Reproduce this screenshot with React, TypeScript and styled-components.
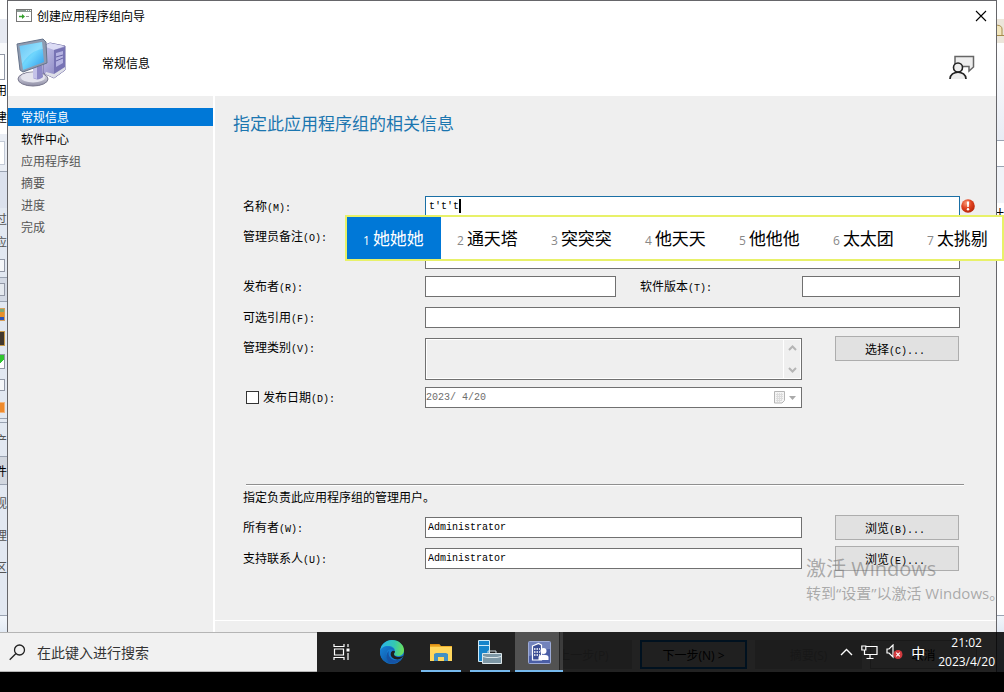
import React from "react";
import styled, { createGlobalStyle, css } from "styled-components";

const GlobalStyle = createGlobalStyle`
  *, *::before, *::after { box-sizing: border-box; }
  html, body { margin: 0; background: #000; }
  body { font: 12px/18px "Noto Sans CJK SC", sans-serif; color: #000; }
  button, input, textarea { font: inherit; color: inherit; margin: 0; border-radius: 0; }
`;

/* ---------- desktop ---------- */

const Screen = styled.div`
  padding-bottom: 20px;
  background: #000;
`;

const Desktop = styled.div`
  position: relative;
  display: grid;
  grid-template-columns: 7px minmax(0, 1fr) 7px;
  min-height: calc(100vh - 20px);
`;

const Strip = styled.div`
  display: flex;
  flex-direction: column;
  width: 7px;
  overflow: hidden;
  background: #e2e8f1;
`;

const Segment = styled.div<{ $h?: number; $bg?: string; $line?: boolean; $dim?: boolean }>`
  display: flex;
  align-items: center;
  justify-content: flex-end;
  flex: ${(p) => (p.$h ? `0 0 ${p.$h}px` : "1 0 0")};
  background: ${(p) => p.$bg ?? "transparent"};
  border-bottom: ${(p) => (p.$line ? "1px solid #9aa3b2" : "0")};
  color: ${(p) => (p.$dim ? "#555" : "#000")};
  white-space: nowrap;
  overflow: hidden;
`;

const MiniBox = styled.span<{ $h: number; $bg: string; $edge?: string }>`
  flex: none;
  width: 10px;
  height: ${(p) => p.$h}px;
  margin-right: 2px;
  background: ${(p) => p.$bg};
  border: 1px solid ${(p) => p.$edge ?? "#9298a6"};
`;

/* ---------- dialog ---------- */

const Dialog = styled.section`
  display: flex;
  flex-direction: column;
  min-width: 0;
  border: 1px solid #66666a;
  border-bottom: 0;
  background: #efefef;
`;

const TitleBar = styled.header`
  display: flex;
  align-items: center;
  gap: 5px;
  height: 29px;
  padding: 0 9px 0 8px;
  background: #fff;
`;

const Title = styled.h1`
  flex: 1;
  margin: 0;
  font-size: 12px;
  font-weight: 400;
`;

const IconButton = styled.button`
  display: grid;
  place-items: center;
  padding: 0;
  border: 0;
  background: transparent;
`;

const Banner = styled.div`
  display: flex;
  align-items: center;
  height: 66px;
  padding: 0 21px 0 8px;
  background: #fff;
`;

const BannerText = styled.h2`
  flex: 1;
  margin: 0 0 0 34px;
  font-size: 12px;
  font-weight: 400;
`;

const FeedbackButton = styled(IconButton)`
  align-self: flex-end;
  margin-bottom: 16px;
`;

const Columns = styled.div`
  flex: 1;
  display: grid;
  grid-template-columns: 205px minmax(0, 1fr);
`;

const Steps = styled.nav`
  display: flex;
  flex-direction: column;
  gap: 4px;
  padding-top: 12px;
`;

const Step = styled.a<{ $state?: "current" | "ready" }>`
  height: 18px;
  padding-left: 13px;
  line-height: 18px;
  text-decoration: none;
  color: #555;
  ${(p) => p.$state === "ready" && css`color: #000;`}
  ${(p) => p.$state === "current" && css`color: #fff; background: #0078d7;`}
`;

const Main = styled.main`
  display: flex;
  flex-direction: column;
  min-width: 0;
  border-left: 2px solid #fff;
`;

const Heading = styled.h3`
  margin: 14px 0 0 18px;
  font-size: 17px;
  line-height: 26px;
  font-weight: 400;
  color: #1b76b0;
`;

const Form = styled.form`
  display: flex;
  flex-direction: column;
  flex: 1;
  gap: 10px;
  padding: 60px 36px 0 28px;
`;

const LabelText = styled.label`
  line-height: 20px;
  white-space: nowrap;
`;

const Row = styled.div<{ $tall?: boolean }>`
  display: grid;
  grid-template-columns: 182px minmax(0, 1fr);
  min-height: 21px;
  margin-bottom: ${(p) => (p.$tall ? "-3px" : "0")};
  ${(p) => p.$tall && css`
    > ${LabelText} { line-height: 18px; }
  `}
`;

const Key = styled.span`
  font: 10px "Liberation Mono", monospace;
`;

const Field = styled.div`
  position: relative;
  display: grid;
  min-width: 0;
`;

const WithButton = styled.div`
  display: grid;
  grid-template-columns: minmax(0, 1fr) 124px;
  column-gap: 33px;
  align-items: start;
  padding-right: 1px;
`;

const Split = styled.div`
  display: grid;
  grid-template-columns: minmax(0, 191fr) 186px minmax(0, 158fr);
`;

const SplitLabel = styled.div`
  padding-left: 24px;
`;

const boxed = css`
  width: 100%;
  border: 1px solid #707070;
  background: #fff;
  padding: 0 2px;
  outline: 0;
  font: 10px/18px "Liberation Mono", monospace;
`;

const TextInput = styled.input<{ $active?: boolean }>`
  ${boxed}
  height: 21px;
  ${(p) => p.$active && css`border-color: #1a6fa5; padding-left: 3px;`}
`;

const DateInput = styled(TextInput)`
  padding-left: 0;
  color: #6d6d6d;
`;

const TextArea = styled.textarea<{ $off?: boolean }>`
  ${boxed}
  display: block;
  height: 42px;
  resize: none;
  overflow: hidden;
  ${(p) => p.$off && css`background: #efefef; box-shadow: inset 0 0 0 1px #fff;`}
`;

const Caret = styled.span`
  position: absolute;
  left: 34px;
  top: 3px;
  width: 2px;
  height: 14px;
  background: #000;
`;

const ErrorBadge = styled.span`
  position: absolute;
  left: 100%;
  top: 3px;
  width: 16px;
  height: 14px;
  display: grid;
  place-items: center;
`;

const Scroller = styled.span`
  position: absolute;
  top: 2px;
  right: 2px;
  bottom: 2px;
  width: 17px;
  display: flex;
  flex-direction: column;
  align-items: center;
  justify-content: space-between;
  padding: 5px 0;
  border-left: 1px solid #fff;
`;

const DateTools = styled.span`
  position: absolute;
  right: 6px;
  top: 4px;
  display: flex;
  align-items: center;
  gap: 3px;
`;

const PushButton = styled.button`
  width: 100%;
  height: 25px;
  margin: -2px 0 -3px;
  padding: 0 4px 0 0;
  line-height: 21px;
  border: 1px solid #adadad;
  background: #e1e1e1;
  text-align: center;
`;

const CheckLabel = styled.label`
  display: flex;
  align-items: center;
  gap: 4px;
  height: 20px;
  padding-left: 3px;
  white-space: nowrap;
`;

const CheckBox = styled.input`
  appearance: none;
  width: 13px;
  height: 13px;
  border: 1px solid #333;
  background: #fff;
`;

const Owners = styled.fieldset`
  display: flex;
  flex-direction: column;
  gap: 10px;
  min-width: 0;
  margin: 66px 0 0;
  padding: 0;
  border: 0;
`;

const Rule = styled.hr`
  width: auto;
  height: 2px;
  margin: 0 -4px -9px 3px;
  border: 0;
  border-top: 1px solid #8f8f8f;
  background: #fff;
`;

const Note = styled.p`
  margin: 0;
  line-height: 20px;
`;

const Footer = styled.footer`
  display: flex;
  justify-content: flex-end;
  gap: 8px;
  height: 52px;
  padding: 19px 19px 0 0;
  border-top: 1px solid #fff;
`;

const FooterButton = styled.button<{ $kind?: "default" | "off" }>`
  width: 107px;
  height: 29px;
  padding: 0;
  border: 1px solid #adadad;
  background: #e1e1e1;
  font: 12px "Open Sans", "Noto Sans CJK SC", sans-serif;
  ${(p) => p.$kind === "default" && css`border: 2px solid #0078d7;`}
  ${(p) => p.$kind === "off" && css`color: #a5a5a5; border-color: #ccc; background: #ccc;`}
`;

/* ---------- input candidates ---------- */

const Candidates = styled.ol`
  position: absolute;
  z-index: 3;
  left: -80px;
  top: 19px;
  display: flex;
  width: 659px;
  height: 46px;
  margin: 0;
  padding: 0;
  list-style: none;
  overflow: hidden;
  border: 2px solid #e8f169;
  background: #fff;
`;

const Candidate = styled.li<{ $on?: boolean }>`
  flex: 0 0 94px;
  display: flex;
  align-items: baseline;
  gap: 3px;
  padding-left: 16px;
  font-size: 17px;
  line-height: 42px;
  white-space: nowrap;
  color: ${(p) => (p.$on ? "#fff" : "#000")};
  background: ${(p) => (p.$on ? "#0078d7" : "transparent")};
`;

const Digit = styled.span<{ $on?: boolean }>`
  font: 12px "Open Sans", sans-serif;
  color: ${(p) => (p.$on ? "#fff" : "#888")};
`;

/* ---------- overlays ---------- */

const Watermark = styled.div`
  position: absolute;
  z-index: 2;
  left: calc(100% - 198px);
  bottom: 68px;
  width: 193px;
  overflow: hidden;
  font-family: "Open Sans", "Noto Sans CJK SC", sans-serif;
  color: rgba(110, 110, 110, 0.55);
  white-space: nowrap;
  pointer-events: none;
`;

const WatermarkTitle = styled.div`
  font-size: 20px;
  line-height: 26px;
`;

const WatermarkText = styled.div`
  font-size: 15px;
  line-height: 22px;
`;

const Taskbar = styled.div`
  position: absolute;
  z-index: 2;
  left: 0;
  right: 0;
  bottom: 0;
  display: flex;
  height: 40px;
  background: rgba(0, 0, 0, 0.86);
`;

const Search = styled.label`
  display: flex;
  align-items: center;
  gap: 11px;
  width: 317px;
  padding-left: 9px;
  border-top: 1px solid #b5b5b5;
  border-bottom: 1px solid #b5b5b5;
  background: #f1f1f1;
`;

const SearchInput = styled.input`
  flex: 1;
  min-width: 0;
  border: 0;
  padding: 0;
  outline: 0;
  background: transparent;
  font-size: 14px;
  &::placeholder { color: #333; opacity: 1; }
`;

const Apps = styled.div`
  display: flex;
  gap: 1px;
  flex: 1;
`;

const AppButton = styled.button<{ $open?: boolean; $active?: boolean; $wide?: boolean }>`
  position: relative;
  display: grid;
  place-items: center;
  width: ${(p) => (p.$wide ? 50 : 48)}px;
  padding: ${(p) => (p.$wide ? "0 2px 0 0" : "0")};
  border: 0;
  background: ${(p) => (p.$active ? "#525252" : "transparent")};
  &::after {
    content: "";
    position: absolute;
    bottom: 0;
    left: ${(p) => (p.$active ? 0 : 4)}px;
    right: ${(p) => (p.$active ? 0 : 4)}px;
    height: 2px;
    background: ${(p) => (p.$open ? "#76b9ed" : "transparent")};
  }
`;

const StackEdge = styled.span`
  position: absolute;
  right: 0;
  top: 0;
  bottom: 0;
  width: 4px;
  background: #3c3c3c;
  border-left: 1px solid #262626;
`;

const Tray = styled.div`
  display: flex;
  align-items: center;
  padding-right: 9px;
  color: #fff;
`;

const TrayIcons = styled.div`
  display: flex;
  align-items: center;
  gap: 8px;
  margin-right: 13px;
  font-size: 14px;
`;

const Clock = styled.time`
  font: 12px/19px "Open Sans", sans-serif;
  text-align: center;
`;

/* ---------- drawings ---------- */

const WizardIcon = () => (
  <svg width="16" height="13" viewBox="0 0 16 13">
    <rect x=".5" y=".5" width="15" height="12" fill="#fff" stroke="#777" />
    <path d="M1 2h14" stroke="#8b9a93" strokeWidth="2" />
    <path d="M10 1.500h1M12 1.500h1M14 1.500h1" stroke="#fff" />
    <path d="M3 7.500h4" stroke="#35a02c" strokeWidth="1.500" />
    <path d="M6 5l3 2.500L6 10z" fill="#35a02c" />
    <path d="M10 7.500h3" stroke="#999" />
  </svg>
);

const CloseIcon = () => (
  <svg width="12" height="12" viewBox="0 0 12 12">
    <path d="M1 1l10 10M11 1L1 11" stroke="#000" strokeWidth="1.100" />
  </svg>
);

const ComputerIcon = () => (
  <svg width="52" height="52" viewBox="0 -2 52 52">
    <defs>
      <linearGradient id="glass" x1="0" y1="0" x2="1" y2="1">
        <stop offset="0" stopColor="#3fb4f2" />
        <stop offset=".5" stopColor="#6fd6fd" />
        <stop offset="1" stopColor="#2c97ea" />
      </linearGradient>
      <linearGradient id="tower" x1="0" y1="0" x2="1" y2="1">
        <stop offset="0" stopColor="#c7c6ec" />
        <stop offset="1" stopColor="#7d78b8" />
      </linearGradient>
      <linearGradient id="stand" x1="0" y1="0" x2="0" y2="1">
        <stop offset="0" stopColor="#eeeef5" />
        <stop offset="1" stopColor="#8e8da5" />
      </linearGradient>
    </defs>
    <path d="M27 7l7-3 15 3v24l-11 8-11-5z" fill="url(#tower)" stroke="#6b679f" />
    <path d="M27 7l7-3 15 3-11 4z" fill="#dcdcf5" />
    <path d="M38 11l11-3v23l-11 8z" fill="#7773b4" />
    <path d="M40 14l7-2v12l-7 4z" fill="#b5b3e2" />
    <path d="M40 18l7-2M40 22l7-3" stroke="#6762a5" />
    <path d="M30 33l8 2 11-7v3l-11 8-9-4z" fill="#dedfe8" />
    <ellipse cx="17" cy="40" rx="15" ry="7" fill="url(#stand)" stroke="#77768c" />
    <ellipse cx="17" cy="38.500" rx="12" ry="5" fill="#e4e4ee" />
    <path d="M17 29l9-3 1 12c-3 3-7 3-10 1z" fill="#8d89c6" />
    <path d="M17 29l4-1v12l-4-1z" fill="#c4c2e8" />
    <path d="M1 5l26-5 3 3 1 21-24 9-3-2z" fill="#8f9bb0" stroke="#65738b" />
    <path d="M3.500 7L26 3l2 20L7 31z" fill="url(#glass)" />
    <path d="M3.500 7L26 3l1 7C18 11 12 16 6 25z" fill="#fff" opacity=".22" />
  </svg>
);

const FeedbackIcon = () => (
  <svg width="27" height="25" viewBox="0 0 27 25" fill="#eee">
    <path d="M7 9V1.500h18.500V12l-4.500 4v-4.500h-7" stroke="#666" strokeWidth="1.500" />
    <circle cx="10" cy="12.500" r="4.500" stroke="#222" strokeWidth="1.600" />
    <path d="M2 24c0-9 16-9 16 0" stroke="#222" strokeWidth="1.700" />
  </svg>
);

const ErrorIcon = () => (
  <svg width="14" height="14" viewBox="0 0 14 14">
    <defs>
      <radialGradient id="alert" cx=".38" cy=".3" r=".75">
        <stop offset="0" stopColor="#f79a76" />
        <stop offset=".5" stopColor="#df4220" />
        <stop offset="1" stopColor="#b52408" />
      </radialGradient>
    </defs>
    <circle cx="7" cy="7" r="6.800" fill="url(#alert)" />
    <path d="M5.800 2.500h2.400L7.700 8H6.300z" fill="#fff" />
    <circle cx="7" cy="10.300" r="1.200" fill="#fff" />
  </svg>
);

const Arrow = ({ up }: { up?: boolean }) => (
  <svg width="9" height="6" viewBox="0 0 9 6" fill="none">
    <path d={up ? "M1 5l3.500-3.500L8 5" : "M1 1l3.500 3.500L8 1"} stroke="#b5b5b5" strokeWidth="2" />
  </svg>
);

const CalendarIcon = () => (
  <svg width="12" height="13" viewBox="0 0 12 13">
    <path d="M.5.5h10v9l-2.500 2.500H.5z" fill="#f4f4f4" stroke="#b5b5b5" />
    <path d="M2 3.500h7M2 5.500h7M2 7.500h7M2 9.500h5M3.500 2v9M5.500 2v9M7.500 2v8" stroke="#dcdcdc" />
  </svg>
);

const DropIcon = () => (
  <svg width="7" height="4" viewBox="0 0 7 4">
    <path d="M0 0h7L3.500 4z" fill="#aaa" />
  </svg>
);

const SearchIcon = () => (
  <svg width="17" height="17" viewBox="0 0 17 17" fill="none" stroke="#222" strokeWidth="1.300">
    <circle cx="10.500" cy="6" r="5" />
    <path d="M7 9.500L.7 15.800" />
  </svg>
);

const TaskViewIcon = () => (
  <svg width="17" height="16" viewBox="0 0 17 16" fill="none" stroke="#fff" strokeWidth="1.200">
    <path d="M1 0v2.500h10V0M1 16v-2.500h10V16M1.500 5h9v6h-9zM15 0v3M15 9v7" />
    <path d="M13.500 4.500h3v3h-3z" fill="#fff" stroke="none" />
  </svg>
);

const EdgeIcon = () => (
  <svg width="24" height="24" viewBox="0 0 24 24">
    <defs>
      <linearGradient id="edgeTop" x1="0" y1=".3" x2="1" y2=".4">
        <stop offset="0" stopColor="#28b4ee" />
        <stop offset=".6" stopColor="#35c8b0" />
        <stop offset="1" stopColor="#6be05a" />
      </linearGradient>
      <linearGradient id="edgeLow" x1="0" y1="0" x2="1" y2="1">
        <stop offset="0" stopColor="#1782d8" />
        <stop offset="1" stopColor="#0d4c99" />
      </linearGradient>
    </defs>
    <circle cx="12" cy="12" r="12" fill="#157bd1" />
    <path d="M0 11C1 4 6 0 12 0c7 0 12 5 12 10 0 4-3 6-6 6-3 0-4-1-4-2 0-1 1-1 1-3 0-3-3-5-7-5-4 0-7 2-8 5z" fill="url(#edgeTop)" />
    <path d="M8 10c-4 5 0 13 7 13.500C9 25 0 21 0 12c1-4 5-6 9-5 3 0 5 2 5 3-2-1-4-1-6 0z" fill="url(#edgeLow)" />
    <path d="M9 11c-2 5 3 10 8 9 2 0 4-1 5-2-3 5-8 6-11 5-5-2-6-9-2-12z" fill="#1553a5" />
    <path d="M14 14c0 1 1 3 5 3 2 0 4-1 4.500-2-1 3-3 4-6 4.500-4 0-8-3-6.500-7 1-2 3-2 4-1 0 1-1 1.500-1 2.500z" fill="#202020" />
  </svg>
);

const FolderIcon = () => (
  <svg width="22" height="19" viewBox="0 0 22 19">
    <path d="M0 1h9l2 2h11v15H0z" fill="#f0b02c" />
    <path d="M0 4h22v14H0z" fill="#ffd75e" />
    <path d="M4 18v-7l2-1h10l2 1v7h-4v-4H8v4z" fill="#4291c4" />
    <path d="M0 1h9l1 1.500H0z" fill="#d98b12" />
  </svg>
);

const ServerIcon = () => (
  <svg width="24" height="24" viewBox="0 0 24 24">
    <path d="M.5.5h11v21H.5z" fill="#1684cb" stroke="#cfe9f7" />
    <path d="M1 5.500h10" stroke="#cfe9f7" />
    <path d="M10 13v-2h8v2" fill="none" stroke="#cfd8dc" />
    <path d="M4.500 13.500h19v10h-19z" fill="#7d97a5" stroke="#dce6ea" />
    <path d="M5 16.500l4 1h10l4-1" fill="none" stroke="#dce6ea" />
  </svg>
);

const ConfigIcon = () => (
  <svg width="23" height="23" viewBox="0 0 23 23">
    <rect x=".5" y=".5" width="22" height="22" rx="1" fill="#4a5ea6" stroke="#9caad6" />
    <path d="M1 1h21v7C14 8 7 14 1 15z" fill="#8e9dcb" opacity=".6" />
    <path d="M4.500 5l6-2.500 3 1.500v15h-9z" fill="#3a4d94" stroke="#fff" strokeWidth="1.200" />
    <path d="M6 8h6M6 11h6M6 14h6" stroke="#fff" strokeWidth="1.500" strokeDasharray="1.500 1" />
    <circle cx="15.500" cy="10" r="3" fill="#fff" />
    <path d="M10.500 19v-3c0-3 10-3 10 0v3z" fill="#fff" />
  </svg>
);

const ChevronUp = () => (
  <svg width="13" height="8" viewBox="0 0 13 8" fill="none">
    <path d="M1 7l5.500-5.500L12 7" stroke="#fff" strokeWidth="1.400" />
  </svg>
);

const NetworkIcon = () => (
  <svg width="17" height="15" viewBox="0 0 17 15" fill="none" stroke="#fff" strokeWidth="1.200">
    <path d="M5 1.500h11v8H3.500V5M9 9.500V13M5.500 13.500h7M.8 1h4v4h-4z" />
  </svg>
);

const SpeakerIcon = () => (
  <svg width="17" height="16" viewBox="0 0 17 16">
    <path d="M1 5h2l4-4v12L3 9H1z" fill="none" stroke="#fff" strokeWidth="1.200" />
    <circle cx="12" cy="10.500" r="4.500" fill="#d13a3e" />
    <path d="M10.200 8.700l3.600 3.600M13.800 8.700l-3.600 3.600" stroke="#fff" strokeWidth="1.100" />
  </svg>
);

const BellIcon = () => (
  <svg width="7" height="14" viewBox="0 0 7 14">
    <path d="M-4 11V5c0-5 9-5 9 0v6M-4 11.500h11" fill="#f3e7be" stroke="#a58b4a" />
  </svg>
);

/* ---------- parts ---------- */

const Label = ({ text, k, htmlFor }: { text: string; k: string; htmlFor: string }) => (
  <LabelText htmlFor={htmlFor}>
    {text}
    <Key>({k}):</Key>
  </LabelText>
);

const ActionButton = ({ text, k }: { text: string; k: string }) => (
  <PushButton type="button">
    {text}
    <Key>({k})...</Key>
  </PushButton>
);

const steps: { text: string; state?: "current" | "ready" }[] = [
  { text: "常规信息", state: "current" },
  { text: "软件中心", state: "ready" },
  { text: "应用程序组" },
  { text: "摘要" },
  { text: "进度" },
  { text: "完成" },
];

const candidates = ["她她她", "通天塔", "突突突", "他天天", "他他他", "太太团", "太挑剔"];

const LeftStrip = () => (
  <Strip>
    <Segment $h={19} $bg="#fff" />
    <Segment $h={24} $bg="#e6e9f1" />
    <Segment $h={10} $bg="#f8f9fb" />
    <Segment $h={27} $bg="#f8f9fb"><MiniBox $h={26} $bg="#fff" /></Segment>
    <Segment $h={20} $bg="#fff">用</Segment>
    <Segment $h={34} $bg="#fff">建</Segment>
    <Segment $h={38} $bg="#e9edf4" $line><MiniBox $h={24} $bg="#fff" $edge="#c3cad6" /></Segment>
    <Segment $h={36} $bg="#dbe1ed" />
    <Segment $h={22} $dim>过</Segment>
    <Segment $h={24} $dim>应</Segment>
    <Segment $h={24} $line><MiniBox $h={13} $bg="#f5f7fa" /></Segment>
    <Segment $h={24} $bg="#d3d9e4" $line><MiniBox $h={13} $bg="#e5e9ef" /></Segment>
    <Segment $h={24}><MiniBox $h={13} $bg="linear-gradient(#7fa874 25%, #e8902a 25% 70%, #2b52b8 70%)" $edge="#d8a05a" /></Segment>
    <Segment $h={24}><MiniBox $h={15} $bg="#42382e" $edge="#c99b4a" /></Segment>
    <Segment $h={23}><MiniBox $h={15} $bg="linear-gradient(135deg, #2fc52f 60%, #fff 60%)" /></Segment>
    <Segment $h={24}><MiniBox $h={12} $bg="#f5f7fa" /></Segment>
    <Segment $h={22} $line><MiniBox $h={11} $bg="#ee8a2c" $edge="#f2b57c" /></Segment>
    <Segment $h={4} $line />
    <Segment $h={34} $dim $line>产</Segment>
    <Segment $h={28} $bg="#d2d7df" $line>件</Segment>
    <Segment $h={36} $dim>视</Segment>
    <Segment $h={28} $dim>理</Segment>
    <Segment $h={36} $dim>区</Segment>
    <Segment $h={31} $line />
    <Segment $bg="linear-gradient(#f2f6fb, #bccde4)" />
  </Strip>
);

const RightStrip = () => (
  <Strip>
    <Segment $h={19} $bg="#fff" />
    <Segment $h={24} $bg="#ece6da"><BellIcon /></Segment>
    <Segment $h={98} $bg="linear-gradient(#fff, #e8ecf4)" $line />
    <Segment $h={26} $bg="#fff" $line />
    <Segment $h={36} $bg="#f0f3f8" />
    <Segment $h={22} $bg="#fff">计</Segment>
    <Segment $h={391} $bg="#fff" $line />
    <Segment $bg="linear-gradient(#f2f6fb, #bccde4)" />
  </Strip>
);

export default function App() {
  return (
    <Screen>
      <GlobalStyle />
      <Desktop>
        <LeftStrip />
        <Dialog>
          <TitleBar>
            <WizardIcon />
            <Title>创建应用程序组向导</Title>
            <IconButton type="button" aria-label="关闭"><CloseIcon /></IconButton>
          </TitleBar>
          <Banner>
            <ComputerIcon />
            <BannerText>常规信息</BannerText>
            <FeedbackButton type="button" aria-label="反馈"><FeedbackIcon /></FeedbackButton>
          </Banner>
          <Columns>
            <Steps>
              {steps.map((s) => (
                <Step key={s.text} href="#" $state={s.state}>{s.text}</Step>
              ))}
            </Steps>
            <Main>
              <Heading>指定此应用程序组的相关信息</Heading>
              <Form>
                <Row>
                  <Label text="名称" k="M" htmlFor="name" />
                  <Field>
                    <TextInput id="name" $active defaultValue="t't't" />
                    <Caret />
                    <ErrorBadge><ErrorIcon /></ErrorBadge>
                    <Candidates>
                      {candidates.map((c, i) => (
                        <Candidate key={c} $on={i === 0}>
                          <Digit $on={i === 0}>{i + 1}</Digit>
                          {c}
                        </Candidate>
                      ))}
                    </Candidates>
                  </Field>
                </Row>
                <Row $tall>
                  <Label text="管理员备注" k="O" htmlFor="notes" />
                  <TextArea id="notes" />
                </Row>
                <Row>
                  <Label text="发布者" k="R" htmlFor="publisher" />
                  <Split>
                    <TextInput id="publisher" />
                    <SplitLabel><Label text="软件版本" k="T" htmlFor="version" /></SplitLabel>
                    <TextInput id="version" />
                  </Split>
                </Row>
                <Row>
                  <Label text="可选引用" k="F" htmlFor="reference" />
                  <TextInput id="reference" />
                </Row>
                <Row $tall>
                  <Label text="管理类别" k="V" htmlFor="category" />
                  <WithButton>
                    <Field>
                      <TextArea id="category" $off readOnly />
                      <Scroller><Arrow up /><Arrow /></Scroller>
                    </Field>
                    <ActionButton text="选择" k="C" />
                  </WithButton>
                </Row>
                <Row>
                  <CheckLabel>
                    <CheckBox type="checkbox" />
                    <span>发布日期<Key>(D):</Key></span>
                  </CheckLabel>
                  <WithButton>
                    <Field>
                      <DateInput aria-label="发布日期" defaultValue="2023/ 4/20" disabled />
                      <DateTools><CalendarIcon /><DropIcon /></DateTools>
                    </Field>
                  </WithButton>
                </Row>
                <Owners>
                  <Rule />
                  <Note>指定负责此应用程序组的管理用户。</Note>
                  <Row>
                    <Label text="所有者" k="W" htmlFor="owner" />
                    <WithButton>
                      <TextInput id="owner" defaultValue="Administrator" />
                      <ActionButton text="浏览" k="B" />
                    </WithButton>
                  </Row>
                  <Row>
                    <Label text="支持联系人" k="U" htmlFor="contact" />
                    <WithButton>
                      <TextInput id="contact" defaultValue="Administrator" />
                      <ActionButton text="浏览" k="E" />
                    </WithButton>
                  </Row>
                </Owners>
              </Form>
              <Footer>
                <FooterButton type="button" $kind="off">&lt; 上一步(P)</FooterButton>
                <FooterButton type="button" $kind="default">下一步(N) &gt;</FooterButton>
                <FooterButton type="button" $kind="off">摘要(S)</FooterButton>
                <FooterButton type="button">取消</FooterButton>
              </Footer>
            </Main>
          </Columns>
        </Dialog>
        <RightStrip />
        <Watermark>
          <WatermarkTitle>激活 Windows</WatermarkTitle>
          <WatermarkText>转到“设置”以激活 Windows。</WatermarkText>
        </Watermark>
        <Taskbar>
          <Search>
            <SearchIcon />
            <SearchInput placeholder="在此键入进行搜索" />
          </Search>
          <Apps>
            <AppButton type="button" $wide aria-label="任务视图"><TaskViewIcon /></AppButton>
            <AppButton type="button" aria-label="Edge"><EdgeIcon /></AppButton>
            <AppButton type="button" $open aria-label="文件资源管理器"><FolderIcon /></AppButton>
            <AppButton type="button" $open aria-label="服务器管理器"><ServerIcon /></AppButton>
            <AppButton type="button" $open $active aria-label="配置管理器"><ConfigIcon /><StackEdge /></AppButton>
          </Apps>
          <Tray>
            <TrayIcons>
              <ChevronUp />
              <NetworkIcon />
              <SpeakerIcon />
              <span>中</span>
            </TrayIcons>
            <Clock>21:02<br />2023/4/20</Clock>
          </Tray>
        </Taskbar>
      </Desktop>
    </Screen>
  );
}
